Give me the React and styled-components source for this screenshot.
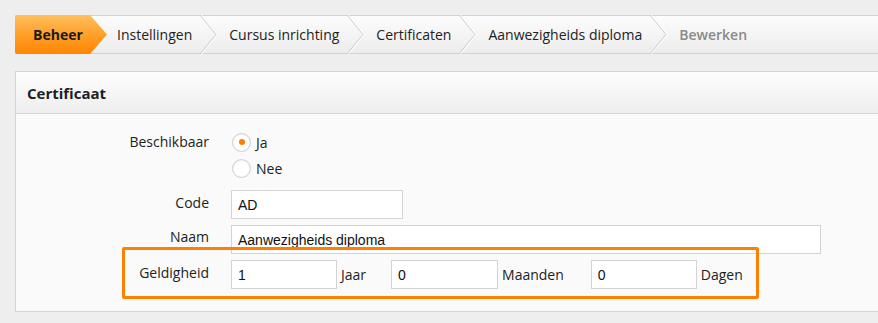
import React from 'react';
import styled, { createGlobalStyle } from 'styled-components';

const GlobalStyle = createGlobalStyle`
  html, body {
    margin: 0;
    padding: 0;
    background: #eeeeee;
    font-family: "Open Sans", "Noto Sans", Arial, sans-serif;
    font-size: 14px;
    color: #222;
  }
  * { box-sizing: border-box; }
`;

const Page = styled.div`
  padding: 15px 0 0 15px;
  min-height: 323px;
  overflow: hidden;
`;

// Breadcrumb bar
const CrumbBar = styled.nav`
  display: flex;
  align-items: center;
  height: 39px;
  border-top: 1px solid #d2d2d2;
  border-bottom: 1px solid #d2d2d2;
  border-left: 1px solid #d2d2d2;
  border-radius: 2px 0 0 2px;
  background: linear-gradient(180deg, #fcfcfc 0%, #f3f3f3 60%, #ececec 100%);
`;

const ActiveCrumb = styled.a`
  display: flex;
  align-items: center;
  align-self: stretch;
  margin: -1px 0 -1px -1px;
  width: 92px;
  padding-left: 18px;
  font-weight: 700;
  color: #1a1a1a;
  text-decoration: none;
  border-radius: 2px 0 0 2px;
  background: linear-gradient(180deg, #ffbf5e 0%, #ffa02a 50%, #ff8500 100%);
  clip-path: polygon(0 0, 75px 0, 100% 50%, 75px 100%, 0 100%);
`;

const Crumb = styled.a`
  display: flex;
  align-items: center;
  align-self: stretch;
  padding-left: 10px;
  color: ${p => (p.current ? '#8a8a8a' : '#222')};
  font-weight: ${p => (p.current ? 600 : 400)};
  text-decoration: none;
  white-space: nowrap;
`;

const ChevronSvg = styled.svg`
  display: block;
  flex-shrink: 0;
  margin: -1px 1px -1px 8px;
`;

const Chevron = () => (
  <ChevronSvg width="18" height="39" viewBox="0 0 18 39">
    <polyline points="0,0 16,19.5 0,39" fill="none" stroke="#cdcdcd" strokeWidth="1" />
    <polyline points="1.5,0 17.5,19.5 1.5,39" fill="none" stroke="#ffffff" strokeWidth="1" />
  </ChevronSvg>
);

// Panel
const Panel = styled.section`
  margin-top: 17px;
  border: 1px solid #d4d4d4;
  border-right: none;
  background: #fafafa;
`;

const PanelHeader = styled.header`
  height: 42px;
  display: flex;
  align-items: center;
  padding-left: 11px;
  border-bottom: 1px solid #d6d6d6;
  background: linear-gradient(180deg, #fdfdfd 0%, #f4f4f4 60%, #eeeeee 100%);
`;

const PanelTitle = styled.h2`
  margin: 0;
  font-size: 15px;
  font-weight: 700;
  color: #1e1e1e;
`;

const PanelBody = styled.div`
  display: flex;
  flex-direction: column;
  gap: 6px;
  padding: 15px 0 22px;
`;

const FormRow = styled.div`
  position: relative;
  display: grid;
  grid-template-columns: 193px 1fr;
  column-gap: 22px;
  align-items: start;
  margin-bottom: ${p => p.spaced || 0}px;
`;

const Label = styled.label`
  text-align: right;
  line-height: 20px;
  padding-top: ${p => p.top ?? 3}px;
  color: #222;
`;

const Field = styled.div`
  display: flex;
  align-items: center;
`;

const RadioGroup = styled.div`
  display: flex;
  flex-direction: column;
`;

const RadioOption = styled.label`
  display: flex;
  align-items: center;
  height: 26px;
  gap: 5px;
  cursor: pointer;
`;

const Radio = styled.input.attrs({ type: 'radio' })`
  appearance: none;
  margin: 0 0 0 1px;
  width: 19px;
  height: 19px;
  border-radius: 50%;
  border: 1px solid #d0d0d0;
  background: radial-gradient(circle, #ffffff 50%, #f1f1f1 100%);
  box-shadow: inset 0 1px 1px rgba(0, 0, 0, 0.04);
  display: grid;
  place-items: center;

  &:checked::after {
    content: '';
    width: 6px;
    height: 6px;
    border-radius: 50%;
    background: #ff7b00;
  }
`;

const TextInput = styled.input`
  height: 29px;
  width: ${p => p.w}px;
  padding: 0 6px;
  border: 1px solid #d3d3d3;
  background: #ffffff;
  font-family: "Liberation Sans", Arial, sans-serif;
  font-size: 14px;
  color: #111;
  outline: none;
`;

const Unit = styled.span`
  padding: 0 ${p => p.after ?? 25}px 0 4px;
  color: #222;
`;

const Highlight = styled.div`
  position: absolute;
  left: 106px;
  top: -13px;
  width: 637px;
  height: 52px;
  border: 3px solid #ff7f00;
  border-radius: 2px;
  pointer-events: none;
`;

const crumbs = ['Instellingen', 'Cursus inrichting', 'Certificaten', 'Aanwezigheids diploma'];

export default function App() {
  return (
    <>
      <GlobalStyle />
      <Page>
        <CrumbBar>
          <ActiveCrumb href="#">Beheer</ActiveCrumb>
          {crumbs.map(c => (
            <Crumb href="#" key={c}>
              {c}
              <Chevron />
            </Crumb>
          ))}
          <Crumb href="#" current>Bewerken</Crumb>
        </CrumbBar>

        <Panel>
          <PanelHeader>
            <PanelTitle>Certificaat</PanelTitle>
          </PanelHeader>
          <PanelBody>
            <FormRow spaced={3}>
              <Label>Beschikbaar</Label>
              <RadioGroup>
                <RadioOption>
                  <Radio name="beschikbaar" defaultChecked />
                  Ja
                </RadioOption>
                <RadioOption>
                  <Radio name="beschikbaar" />
                  Nee
                </RadioOption>
              </RadioGroup>
            </FormRow>

            <FormRow>
              <Label>Code</Label>
              <Field>
                <TextInput w={172} defaultValue="AD" />
              </Field>
            </FormRow>

            <FormRow>
              <Label top={2}>Naam</Label>
              <Field>
                <TextInput w={590} defaultValue="Aanwezigheids diploma" />
              </Field>
            </FormRow>

            <FormRow>
              <Label>Geldigheid</Label>
              <Field>
                <TextInput w={106} defaultValue="1" />
                <Unit>Jaar</Unit>
                <TextInput w={107} defaultValue="0" />
                <Unit after={27}>Maanden</Unit>
                <TextInput w={106} defaultValue="0" />
                <Unit after={0}>Dagen</Unit>
              </Field>
              <Highlight />
            </FormRow>
          </PanelBody>
        </Panel>
      </Page>
    </>
  );
}
